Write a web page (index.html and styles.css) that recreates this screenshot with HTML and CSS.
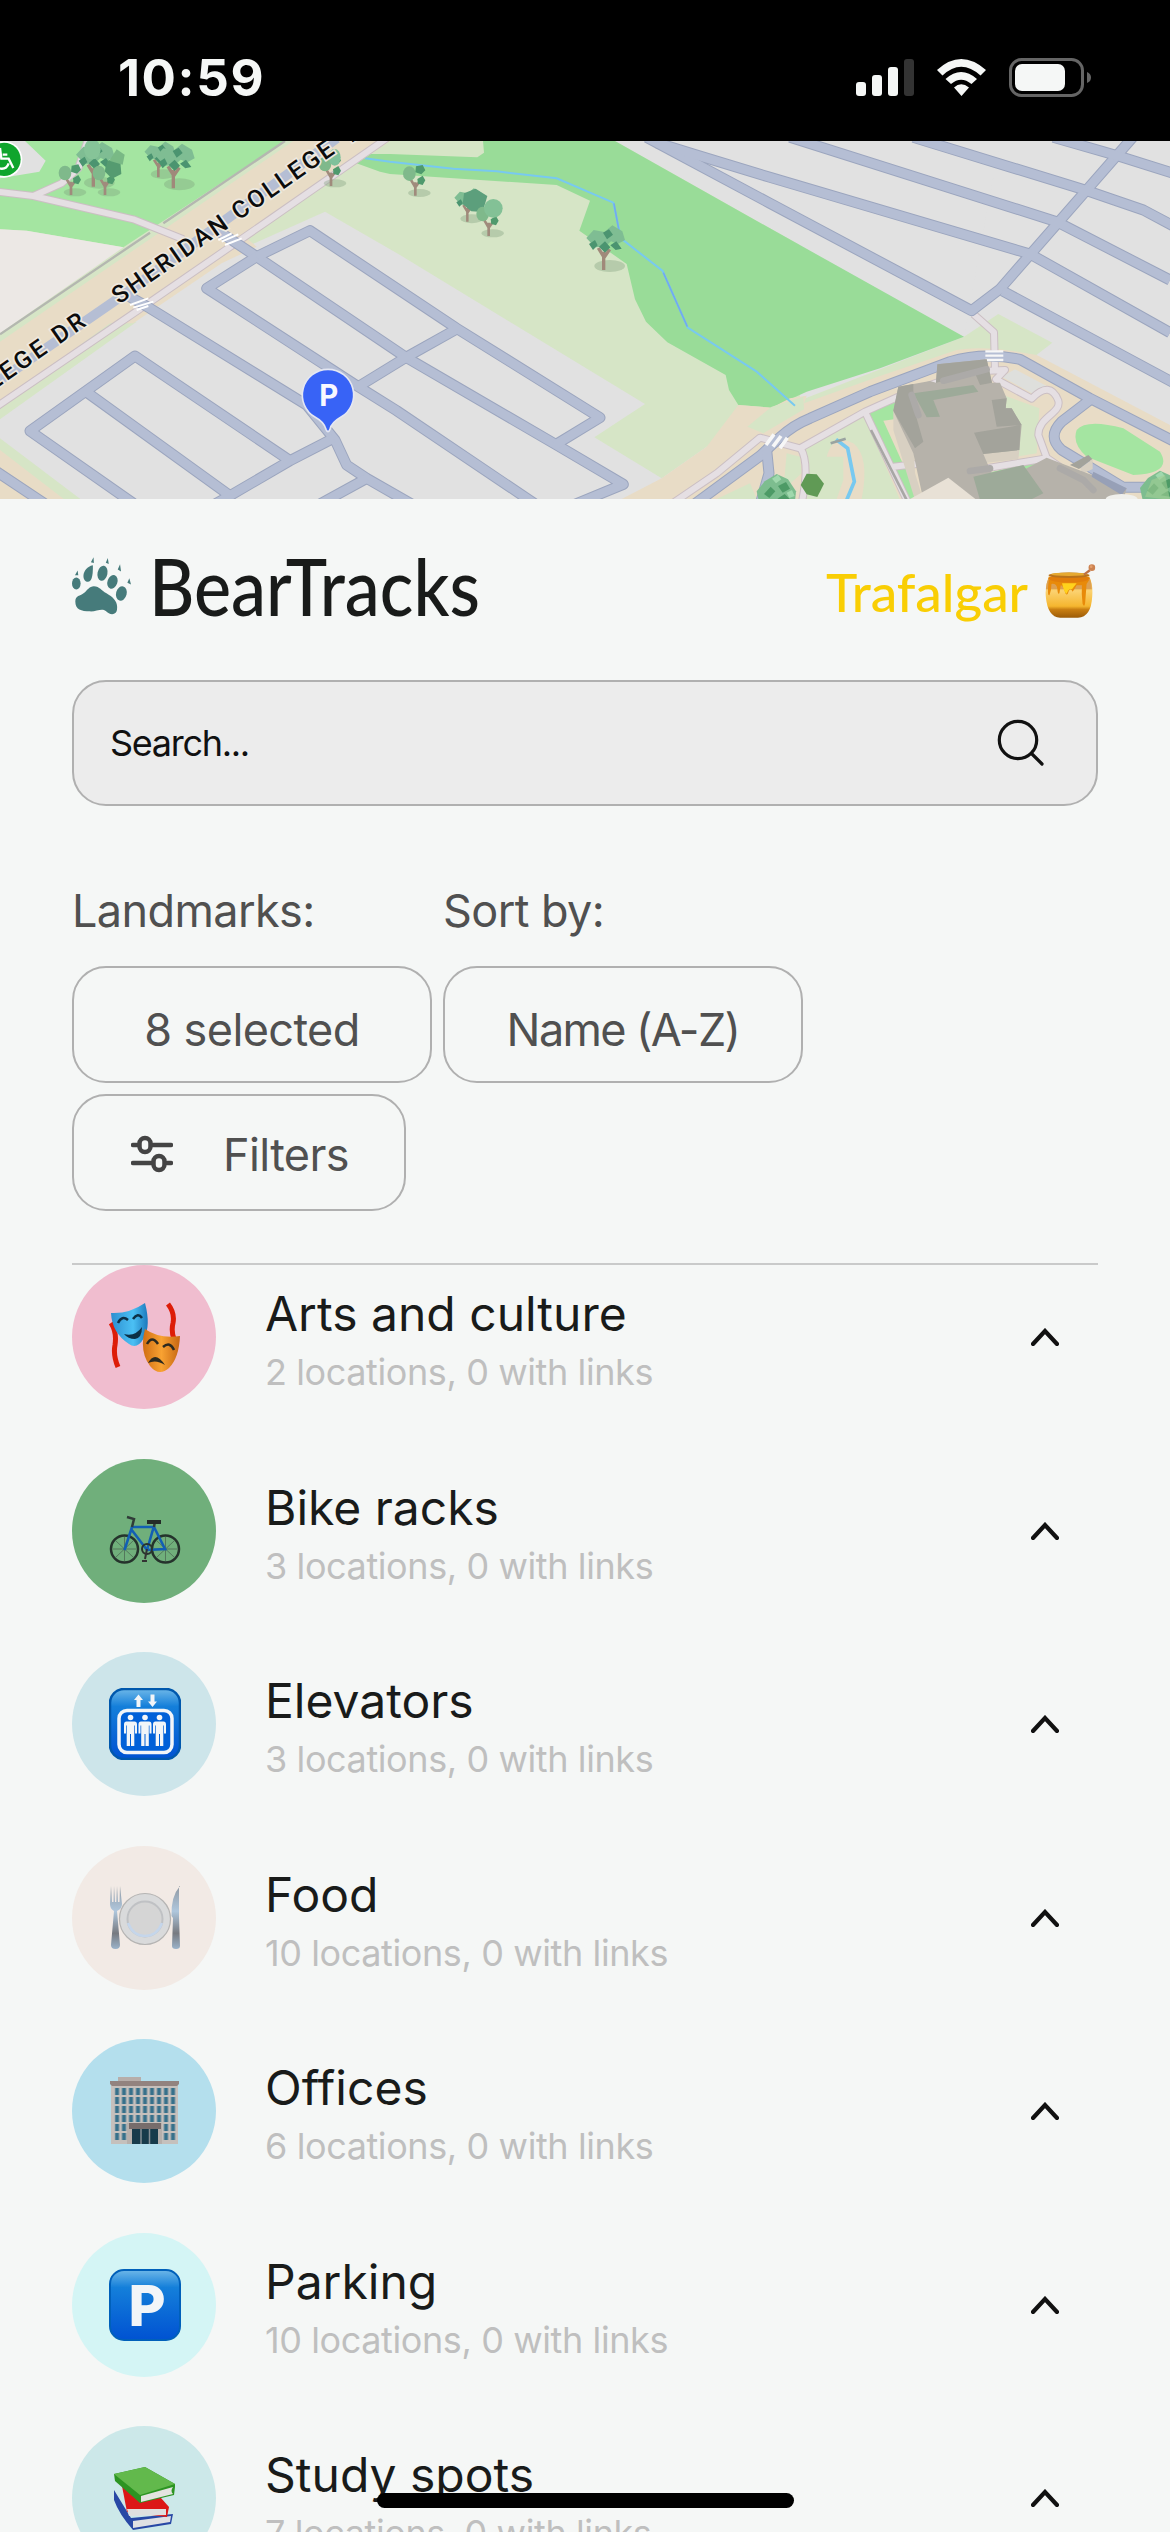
FILE: index.html
```html
<!DOCTYPE html>
<html lang="en">
<head>
    <meta charset="UTF-8">
    <meta name="viewport" content="width=device-width, initial-scale=1.0">
    <title>BearTracks</title>
    <link rel="stylesheet" href="styles.css">
</head>
<body>
    <div class="screen">
        <div class="status-bar">
            <span class="time">10:59</span>
            <svg class="status-icons" viewBox="856 56 236 44">
                <g fill="#f5f7f6">
                    <rect x="856" y="82" width="10" height="14" rx="3"/>
                    <rect x="872" y="75" width="10" height="21" rx="3"/>
                    <rect x="888" y="67" width="10" height="29" rx="3"/>
                </g>
                <rect x="904" y="59" width="10" height="37" rx="3" fill="#333"/>
                <path fill="#f5f7f6" d="M937 70Q961 48 986 70L980.500 75.500Q961 58 942.500 75.500ZM945.500 79Q961 65 977 79L971.500 84Q961 75.500 951 84ZM954 87.500Q961 81 969 87.500L961.500 96Z"/>
                <rect x="1010.500" y="59.500" width="72" height="36" rx="11" fill="none" stroke="#656565" stroke-width="3"/>
                <rect x="1015" y="64" width="50" height="27" rx="7" fill="#f5f7f6"/>
                <path d="M1087 72q4 1.500 4 5.500t-4 5.500z" fill="#656565"/>
            </svg>
        </div>

        <svg class="map" viewBox="0 3 3510 1074" preserveAspectRatio="none">
            <defs>
                <g id="tree-round">
                    <ellipse cx="12" cy="-8" rx="34" ry="12" fill="#7a9a78" opacity=".35"/>
                    <path d="M0 0V-40M0-25l-14-24M0-25l16-22" stroke="#a08b7c" stroke-width="8" fill="none"/>
                    <ellipse cx="-18" cy="-66" rx="19" ry="22" fill="#7fb98b"/>
                    <path d="M2-88l20-4 8 16-12 12-18-6zM6-50l16-10 8 14-8 14-14-4z" fill="#4f9a6d"/>
                </g>
                <g id="tree-tall">
                    <ellipse cx="18" cy="-12" rx="46" ry="18" fill="#7a9a78" opacity=".35"/>
                    <path d="M0 0V-55M0-40l-16-26M0-36l18-26" stroke="#a0897a" stroke-width="10" fill="none"/>
                    <path d="M-52-96l22-24 32 6 24-20 30 18 8 26-22 12-20-8-18 16-30 2z" fill="#7fbd93"/>
                    <path d="M-44-78l18-12 8 16-14 14zM-14-70l18-16 16 18-16 16zM20-74l18-12 16 22-18 4zM-2-112l18-10 12 16-18 14z" fill="#4b9470"/>
                </g>
                <g id="bush">
                    <path d="M-52 40l-8-36 24-30 36-22 34 16 24 36-4 40z" fill="#7dbd8f"/>
                    <path d="M-38 12l20-22 14 14-18 20zM4-12l24-12 12 20-22 12zM2 26l22-14 20 20z" fill="#4d9a66"/>
                    <path d="M-14-34l18-12 10 14-16 12zM30 8l16-8 8 18-16 6z" fill="#a0d8ad"/>
                </g>
                <g id="lot-lines">
                    <path d="M650 270L770 350 1218 652 1670 915 1870 1033 1720 1095"/>
                    <path d="M770 350L930 272 1370 565 1800 833 1665 915"/>
                    <path d="M770 350L620 445 1075 740 1190 812 1610 1095"/>
                    <path d="M1075 740L1218 652 1370 567"/>
                    <path d="M380 465L450 505 920 795 1005 900 1040 975 1100 1015 1240 1095"/>
                    <path d="M1000 895L870 962 690 1067 640 1095M1100 1015L960 1092"/>
                    <path d="M870 962L405 648 90 873 400 1090M258 755L690 1067M-10 995L140 1095"/>
                    <path d="M1940-8L2310 190 2915 512 3000 447 3400-10"/>
                    <path d="M1970 8L2080 42 2310 112 3090 342 3510 578"/>
                    <path d="M2370-8L3170 245 3510 420M2740-8L3255 150 3430 210 3520 258"/>
                    <path d="M3160-8L3355 48 3520 100M3008 453L3520 728"/>
                    <path d="M2080 1095L2280 948 2340 892Q2380 855 2430 835L2610 755 2850 665Q2950 635 3060 658L3270 775 3520 903"/>
                    <path d="M3272 778L3185 845Q3140 890 3185 930L3370 1042H3520M2300 930L2307 1000 2280 1095"/>
                </g>
                <g id="walks">
                    <path d="M-10 155L100 168 400 238 550 298M100 168L185 130 235 85 265-5"/>
                    <path d="M-10 800L430 500 800 245 1160-5"/>
                    <path d="M2010 1095L2150 1000 2280 893 2400 925 2595 815 2700 768 2900 695 3015 690 2988 718 3095 776Q3150 720 3175 782C3185 820 3115 830 3115 885L3140 953 3280 1050"/>
                    <path d="M2920 522L2982 577 2985 690M2402 925Q2430 970 2405 1090M2595 815L2725 1090M2680 980L2750 972M2910 993L3140 955"/>
                </g>
            </defs>

            <rect width="3510" height="1080" fill="#e1e1e1"/>
            <!-- grass around the lots -->
            <path fill="#d6e5c6" d="M0 3H900L0 620ZM740 320L975 215 1200 345 1935 792 1783 892 1985 1015 2120 920 2300 820 2892 590 2995 522 3157 608 3090 660 2400 900 2400 3H1100L720 280ZM0 780L340 540 410 545 0 838ZM0 895L245 1080H0Z"/>
            <path fill="#a4e5a1" d="M0 3H855L370 322 80 272 0 268Z"/>
            <path fill="#ece8e5" d="M0 268L80 272 370 322 0 580Z"/>
            <path fill="#e1e1e1" d="M0 3H75L137 62 118 95 0 115ZM2310 265L1845 3H3000L2892 590Z"/>
            <path fill="#99dc98" d="M1449 3L1452 38 1432 52 1170 42 1090 42 1057 65 1140 95 1170 102 1670 135 1770 182 1738 272 1880 372 1905 478 1938 545 2002 607 2177 705 2187 750 2215 795 2315 803 2420 755 2640 685 2892 590 2310 265 1845 3Z"/>
            <path fill="#e8dcc6" d="M0 605L460 290 880 3H1170L740 295 770 320 665 370 400 550H330L0 790ZM0 930L195 1080H0ZM1865 1077L1985 1015 2120 920 2215 795 2315 803 2370 775 2420 767 2412 790 2640 708 2870 630Q2960 615 3110 645L3510 855V1080Z"/>
            <path fill="#d6e5c6" d="M2315 800L2242 860 2290 880 2412 808 2410 770ZM2410 930L2590 820 2700 1080H2410ZM2150 1077L2250 1030 2270 1077ZM2360 940L2400 950 2405 1000 2350 1050ZM2995 760L3118 805 3110 940 2990 960Z"/>
            <path fill="#e8dcc6" d="M2480 950Q2500 880 2560 910Q2610 950 2585 1077H2510L2530 1020 2530 950Z"/>
            <path fill="#a4e5a1" d="M2605 820L2700 780 2700 950 2770 1080H2720ZM2960 1000L3140 955 3160 1080H2900ZM3230 870Q3260 835 3370 865L3480 935Q3520 1000 3400 1005L3260 950Q3215 910 3230 870Z"/>
            <path fill="#e8dcc6" d="M2650 842L2682 838 2742 960 2738 985 2715 985Z"/>
            <path fill="#dedfdc" d="M3005 710L3045 688 3140 738 3100 762Z"/>
            <path fill="none" stroke="#b4b7b0" stroke-width="7" d="M0 583L450 278M490 250L855 3"/>

            <g fill="none" stroke="#78c9f0" stroke-width="6">
                <path d="M1095 55L1170 65 1360 86 1490 94 1670 115 1840 188 1863 295 1988 393 2063 563 2270 695 2385 797"/>
                <path d="M2508 898L2543 925 2563 1025 2540 1080" stroke-width="11"/>
            </g>
            <path d="M1842 190L1860 290M1990 398L2062 560" stroke="#73abed" stroke-width="5"/>
            <path d="M2492 910l45-14" stroke="#9aa3a0" stroke-width="8"/>

            <g fill="none" stroke-linejoin="round">
                <use href="#walks" stroke="#cbbfc3" stroke-width="24"/>
                <use href="#walks" stroke="#e5dfe3" stroke-width="18"/>
                <use href="#lot-lines" stroke="#9ba5be" stroke-width="33"/>
                <use href="#lot-lines" stroke="#b5bed4" stroke-width="27"/>
                <path d="M-10 727L370 465 1010 -5" stroke="#b5bed4" stroke-width="30"/>
            </g>
            <path d="M390 495l55-20M400 503l60-18M410 510l35-12M655 300l40-20M665 305l50-22M675 315l50-20" stroke="#fff" stroke-width="6"/>
            <path d="M2298 915l24-32M2319 920l24-32M2340 925l22-32" stroke="#f7f7f7" stroke-width="11"/>
            <path d="M2956 634h54M2956 647h54M2956 660h54" stroke="#f7f7f7" stroke-width="7"/>

            <!-- campus buildings -->
            <path fill="#d8d0c2" d="M2680 810L2742 930 2745 1000 2770 1080H2745L2680 870ZM2945 942L3058 930 3055 958 2960 968ZM3240 985l38-28v30l-30 14z"/>
            <path fill="#b6b2aa" d="M2695 740L2790 723 2808 728 2812 673 2960 658 2976 728 3000 728 3020 775 3017 805 3035 805 3065 855 3058 930 2950 942 2975 1000 3010 1022 3140 953 3380 1045 3370 1080H2770L2740 940 2680 812Z"/>
            <path fill="#a3a39b" d="M2695 740L2740 732 2740 800 2770 905 2745 925 2680 812ZM2812 673L2960 658 2976 728 2940 735 2925 700 2808 728ZM2922 878L3062 855 3058 930 2950 942ZM2975 780L3020 775 3017 805 3035 805 3065 855 2990 860ZM3210 975l55-30 12 12-40 30z"/>
            <path fill="#9daa99" d="M2740 760L2920 735 2935 755 2800 780 2820 830 2780 832ZM2920 1010L3070 975 3130 1060 3090 1080H2940Z"/>
            <path fill="none" stroke="#acaaa8" stroke-width="20" stroke-linecap="round" d="M2735 765L2755 825M2830 722L2960 688M2910 993L2970 985M3180 985L3250 1020 3280 1050"/>
            <path fill="#97a0b7" d="M3280 995L3380 1045 3365 1065 3275 1010Z"/>
            <path fill="#e8e1d6" d="M2725 1080L2845 1013 2930 1080Z"/>
            <path fill="none" stroke="#a8a7a5" stroke-width="8" d="M2613 870L2720 1080"/>
            <ellipse cx="3365" cy="1078" rx="48" ry="16" fill="#f0f0ec"/>

            <!-- trees -->
            <use href="#tree-round" x="213" y="165"/>
            <use href="#tree-tall" transform="translate(280 140)"/>
            <ellipse cx="277" cy="28" rx="25" ry="30" fill="#86c498"/>
            <use href="#tree-round" transform="translate(315 165)"/>
            <path d="M322 62l38-10 4 50-28 14-20-20z" fill="#559b70"/>
            <path d="M328 62l22-34 24 16-6 30z" fill="#79b985"/>
            <use href="#tree-tall" transform="translate(475 112) scale(.8)"/>
            <use href="#tree-tall" transform="translate(520 145)"/>
            <use href="#tree-round" x="993" y="138"/>
            <ellipse cx="1004" cy="52" rx="18" ry="25" fill="#7fc19b"/>
            <use href="#tree-round" x="1246" y="167"/>
            <use href="#tree-tall" transform="translate(1402 245) scale(.75)"/>
            <path d="M1392 160l35-14 35 22-14 48-34-2-26-22z" fill="#5c9f7c"/>
            <use href="#tree-round" x="1466" y="288"/>
            <ellipse cx="1480" cy="205" rx="28" ry="28" fill="#83c196"/>
            <use href="#tree-tall" transform="translate(1811 390)"/>
            <use href="#bush" x="2330" y="1050"/>
            <path fill="#609a55" d="M2402 1035l18-34 30 2 22 28-20 40-32-8z"/>
            <use href="#bush" x="3480" y="1040"/>
            <path fill="#a1cf95" d="M3435 1070l20-50 40-16 15 76z" opacity=".6"/>

            <g class="street-label">
                <text transform="translate(357 494) rotate(-35)" textLength="802">SHERIDAN COLLEGE</text>
                <text transform="translate(1054 10) rotate(-35)">DR</text>
                <text transform="translate(-20 752) rotate(-35)" textLength="352">LEGE DR</text>
            </g>

            <g>
                <circle cx="12" cy="58" r="55" fill="#fff"/>
                <circle cx="12" cy="58" r="50" fill="#0fa52d"/>
                <path d="M0 24l4 32h22l14 28M8 44h14M-4 54q-20 24 6 32 18 2 24-16" fill="none" stroke="#fff" stroke-width="7"/>
            </g>
            <g>
                <path d="M984 688a77 77 0 0 1 38 144q-28 16-32 36-6 14-12 0-6-22-32-36a77 77 0 0 1 38-144z" fill="#3863f6" stroke="#e4e7f2" stroke-width="5"/>
                <text class="pin-label" x="986" y="798">P</text>
            </g>
        </svg>

        <div class="content">
            <header class="header">
                <div class="brand">
                    <svg class="paw" viewBox="66 80 178 173" fill="#467b7b">
                        <path d="M132 167C150 168 154 180 170 188 190 200 204 212 202 234 202 256 180 256 168 242 156 232 140 244 120 243 94 242 76 238 76 213 76 194 90 198 104 186 114 177 118 168 132 167Z"/>
                        <ellipse cx="79" cy="159" rx="13" ry="18"/>
                        <path d="M129 104Q130 154 114 154C94 154 94 112 129 104Z"/>
                        <ellipse cx="158" cy="128" rx="15" ry="23" transform="rotate(12 158 128)"/>
                        <ellipse cx="188" cy="154" rx="15" ry="21" transform="rotate(20 188 154)"/>
                        <ellipse cx="215" cy="189" rx="16" ry="22" transform="rotate(15 215 189)"/>
                        <path d="M75 134l8-14 2 14zM123 95l8-15 1 17zM168 96l6-14 3 18zM204 117l7-16 3 22zM233 157l6-14 5 19z"/>
                    </svg>
                    <h1 class="brand-name"><span>BearTracks</span></h1>
                </div>
                <div class="campus">
                    <span class="campus-name">Trafalgar</span>
                    <svg class="honey" viewBox="795 102 153 163">
                        <defs>
                            <linearGradient id="honey-pot" x1="0" x2="0" y1="0" y2="1">
                                <stop offset="0" stop-color="#e89a1d"/>
                                <stop offset=".35" stop-color="#fbd271"/>
                                <stop offset=".72" stop-color="#f5b62f"/>
                                <stop offset=".8" stop-color="#c97f12"/>
                                <stop offset="1" stop-color="#9c5c08"/>
                            </linearGradient>
                        </defs>
                        <path d="M806 140Q794 170 797 200Q802 262 840 264H894Q934 262 937 200Q940 165 928 140Z" fill="url(#honey-pot)"/>
                        <path d="M797 178Q800 150 808 144H928Q936 160 936 178Z" fill="#dca052"/>
                        <path d="M806 150Q800 200 808 196Q814 180 814 162 830 160 832 178 833 196 838 190L842 166Q850 166 856 190 862 200 866 184 872 172 878 186 882 180 890 166H906Q904 190 908 222 914 236 916 216L920 162 928 150Z" fill="#e88a09"/>
                        <path d="M846 160Q852 188 860 192 866 174 876 178L890 160Z" fill="#ffd21c"/>
                        <ellipse cx="867" cy="146" rx="62" ry="12" fill="#e17d0a"/>
                        <ellipse cx="867" cy="136" rx="62" ry="8" fill="#b9721a"/>
                        <ellipse cx="867" cy="133" rx="54" ry="5" fill="#e6a930"/>
                        <path d="M912 134L930 121" stroke="#bd7144" stroke-width="7"/>
                        <circle cx="936" cy="113" r="10" fill="#cc8250"/>
                        <circle cx="934" cy="110" r="4" fill="#e5a06c"/>
                    </svg>
                </div>
            </header>

            <div class="search">
                <span class="search-text">Search...</span>
                <svg class="search-icon" viewBox="0 0 48 48">
                    <circle cx="21" cy="21" r="18.700"/>
                    <path d="M35 35L45 45"/>
                </svg>
            </div>

            <div class="controls">
                <div class="control">
                    <label class="control-label">Landmarks:</label>
                    <button class="btn">8 selected</button>
                </div>
                <div class="control">
                    <label class="control-label">Sort by:</label>
                    <button class="btn btn-sort">Name (A-Z)</button>
                </div>
                <button class="btn btn-filters">
                    <svg class="sliders" viewBox="132 1134 42 38">
                        <path d="M134 1144h5M153 1144h19M134 1162h19M168 1162h4"/>
                        <rect x="140.500" y="1137" width="11" height="14" rx="5.500"/>
                        <rect x="154.500" y="1155" width="11" height="14" rx="5.500"/>
                    </svg>
                    <span>Filters</span>
                </button>
            </div>

            <div class="list">
                <div class="row">
                    <div class="badge badge-arts">
                        <svg class="emoji" viewBox="0 0 72 72">
                            <defs>
                                <linearGradient id="mask-blue" x1="0" x2="1"><stop offset="0" stop-color="#2d8fd0"/><stop offset=".6" stop-color="#4bc0f4"/><stop offset="1" stop-color="#1c79bd"/></linearGradient>
                                <linearGradient id="mask-gold" x1="0" x2="1"><stop offset="0" stop-color="#d06d13"/><stop offset=".5" stop-color="#f8a232"/><stop offset="1" stop-color="#c66612"/></linearGradient>
                            </defs>
                            <path d="M2 22q6 9 4 22-2 10 3 22M59 3q7 9 5 19-2 8 1 16" fill="none" stroke="#dd1c08" stroke-width="5"/>
                            <path d="M2 12Q20 13 36 2 42 25 35 37 28 49 20 43 3 32 2 12Z" fill="url(#mask-blue)"/>
                            <path d="M9 22q4-8 10-3M24 18q5-7 9-1" stroke="#0c3046" stroke-width="2.500" fill="none"/>
                            <path d="M15 33q11 3 18-7 0 11-7 12-7 0-11-5" fill="#0c3046"/>
                            <path d="M36 28Q50 38 71 35 70 57 60 67 50 76 41 65 30 50 36 28Z" fill="url(#mask-gold)"/>
                            <path d="M38 43q5-9 11 0M54 46q7-6 11 3" stroke="#2c2a20" stroke-width="2.500" fill="none"/>
                            <path d="M39 62q7-13 17 2-9-6-17-2" fill="#2c2a20"/>
                        </svg>
                    </div>
                    <div class="row-text">
                        <div class="row-title">Arts and culture</div>
                        <div class="row-sub">2 locations, 0 with links</div>
                    </div>
                    <svg class="chevron" viewBox="0 0 28 18"><path d="M2 16L14 3 26 16"/></svg>
                </div>
                <div class="row">
                    <div class="badge badge-bike">
                        <svg class="emoji" viewBox="0 0 72 72">
                            <g fill="none">
                                <circle cx="15.500" cy="54" r="13.500" stroke="#25332c" stroke-width="2.500"/>
                                <circle cx="56.500" cy="54" r="13.500" stroke="#25332c" stroke-width="2.500"/>
                                <path d="M15.500 42v24M4 54h23M7 46l17 16M7 62l17-16M56.500 42v24M45 54h23M48 46l17 16M48 62l17-16" stroke="#47604f" stroke-width=".7"/>
                                <path d="M15.500 55L23 32H45L56 54 38 55 22 34M45 31L38 55" stroke="#125fb4" stroke-width="2.600"/>
                                <path d="M23 32l2-8-7-2M45 32l1-6" stroke="#303c38" stroke-width="2.500"/>
                                <path d="M38 27h14" stroke="#242b28" stroke-width="4"/>
                                <circle cx="38" cy="54" r="5" stroke="#28332d" stroke-width="2"/>
                                <path d="M38 54l-2 10M33 66h5" stroke="#333" stroke-width="2"/>
                            </g>
                        </svg>
                    </div>
                    <div class="row-text">
                        <div class="row-title">Bike racks</div>
                        <div class="row-sub">3 locations, 0 with links</div>
                    </div>
                    <svg class="chevron" viewBox="0 0 28 18"><path d="M2 16L14 3 26 16"/></svg>
                </div>
                <div class="row">
                    <div class="badge badge-elevator">
                        <svg class="emoji" viewBox="0 0 72 72">
                            <defs>
                                <linearGradient id="tile" x1="0" x2="0" y1="0" y2="1"><stop offset="0" stop-color="#6db7e8"/><stop offset=".25" stop-color="#147fda"/><stop offset="1" stop-color="#0052d2"/></linearGradient>
                                <g id="person"><circle cx="0" cy="29.500" r="2.800"/><path d="M-4 33.500h8q2.500 0 2.500 3v9h-2v-8h-.7V58H.5V46h-1v12h-3.300V37.500h-.7v8h-2v-9q0-3 2.500-3z"/></g>
                            </defs>
                            <rect x="1" y="1" width="70" height="70" rx="14" fill="url(#tile)" stroke="#0058ad" stroke-width="2.500"/>
                            <rect x="10" y="22.500" width="53" height="42" rx="8" fill="#0060d8" stroke="#f2f5f8" stroke-width="3.500"/>
                            <path d="M29.500 6.500l4.500 5.500h-2.500v7h-4v-7H25zM43.500 19l-4.500-5.500h2.500v-7h4v7H48z" fill="#f2f5f8"/>
                            <g fill="#f2f5f8">
                                <use href="#person" x="21.500"/>
                                <use href="#person" x="36"/>
                                <use href="#person" x="50.500"/>
                            </g>
                        </svg>
                    </div>
                    <div class="row-text">
                        <div class="row-title">Elevators</div>
                        <div class="row-sub">3 locations, 0 with links</div>
                    </div>
                    <svg class="chevron" viewBox="0 0 28 18"><path d="M2 16L14 3 26 16"/></svg>
                </div>
                <div class="row">
                    <div class="badge badge-food">
                        <svg class="emoji" viewBox="0 0 72 72">
                            <defs>
                                <linearGradient id="steel" x1="0" x2="0" y1="0" y2="1"><stop offset="0" stop-color="#9099a3"/><stop offset=".4" stop-color="#afc7dd"/><stop offset=".75" stop-color="#777a80"/><stop offset="1" stop-color="#9bb3ca"/></linearGradient>
                            </defs>
                            <circle cx="36" cy="37" r="25.500" fill="#d9dadb" stroke="#b5b4b3" stroke-width="1.200"/>
                            <circle cx="36" cy="37" r="17.500" fill="#d5d5d5" stroke="#bfc1c4" stroke-width="2"/>
                            <path d="M19 41q5 13 17 13t17-13" stroke="#c5d6eb" stroke-width="2.500" fill="none"/>
                            <path d="M2 4l-1 18q0 5 4 7L2 63q0 4 4.500 4T11 63L8 29q5-2 5-7L11 4 10.500 20H9L8 4 7.300 20H6L5 4 4.500 20H3z" fill="url(#steel)"/>
                            <path d="M71 4Q62 14 62.500 34L64 36 63 64q0 3 4 3t4-3L70 35V4z" fill="url(#steel)"/>
                        </svg>
                    </div>
                    <div class="row-text">
                        <div class="row-title">Food</div>
                        <div class="row-sub">10 locations, 0 with links</div>
                    </div>
                    <svg class="chevron" viewBox="0 0 28 18"><path d="M2 16L14 3 26 16"/></svg>
                </div>
                <div class="row">
                    <div class="badge badge-office">
                        <svg class="emoji" viewBox="0 0 72 72">
                            <defs>
                                <pattern id="windows" x="5.500" y="13" width="7" height="9" patternUnits="userSpaceOnUse"><rect x=".5" width="4" height="7" fill="#37718b"/></pattern>
                            </defs>
                            <path d="M9 2h23v5H9z" fill="#b7aeaa"/>
                            <path d="M2 8h67v61H2z" fill="#c5c0bc"/>
                            <path d="M1 6h69v3l-2 2H3L1 9z" fill="#92837f"/>
                            <rect x="5.500" y="13" width="62" height="54" fill="url(#windows)"/>
                            <path d="M18 48h35v21H18z" fill="#b7b0ac"/>
                            <path d="M20 48h32v6H20z" fill="#776d6c"/>
                            <path d="M23 54h26v15H23z" fill="#173b4b"/>
                            <path d="M32 54v15M40.500 54v15" stroke="#879096" stroke-width="1.500"/>
                        </svg>
                    </div>
                    <div class="row-text">
                        <div class="row-title">Offices</div>
                        <div class="row-sub">6 locations, 0 with links</div>
                    </div>
                    <svg class="chevron" viewBox="0 0 28 18"><path d="M2 16L14 3 26 16"/></svg>
                </div>
                <div class="row">
                    <div class="badge badge-parking">
                        <svg class="emoji" viewBox="0 0 72 72">
                            <rect x="1" y="1" width="70" height="70" rx="14" fill="url(#tile)" stroke="#0060ba" stroke-width="2"/>
                            <text class="tile-letter" x="38" y="56.500">P</text>
                        </svg>
                    </div>
                    <div class="row-text">
                        <div class="row-title">Parking</div>
                        <div class="row-sub">10 locations, 0 with links</div>
                    </div>
                    <svg class="chevron" viewBox="0 0 28 18"><path d="M2 16L14 3 26 16"/></svg>
                </div>
                <div class="row">
                    <div class="badge badge-study">
                        <svg class="emoji" viewBox="0 0 72 72">
                            <path d="M5 28L22 56 64 52 62 62 24 68Q10 52 5 38Z" fill="#2848a5"/>
                            <path d="M24 59l38-5-1 6-37 6z" fill="#dfe0e3"/>
                            <path d="M13 24L18 50 58 55 60 45 52 36Z" fill="#dc1717"/>
                            <path d="M18 47l39 0 0 6-37 1z" fill="#dfdfdf"/>
                            <path d="M5 12L36 5 66 22 66 25 65 33 31 41 6 19Z" fill="#2c9422"/>
                            <path d="M5 12L36 5 66 22 31 33Z" fill="#62b94c"/>
                            <path d="M32 34l32-9q-3 4 0 7l-32 8z" fill="#e4e4e0"/>
                        </svg>
                    </div>
                    <div class="row-text">
                        <div class="row-title">Study spots</div>
                        <div class="row-sub">7 locations, 0 with links</div>
                    </div>
                    <svg class="chevron" viewBox="0 0 28 18"><path d="M2 16L14 3 26 16"/></svg>
                </div>
            </div>
        </div>
        <div class="home-indicator"></div>
    </div>
</body>
</html>
```
FILE: styles.css
```css
:root {
    --bg: #f5f7f6;
    --text-color: #191b1a;
    --muted: #505050;
    --faint: #bfbfbf;
    --border: #b0b0b0;
}

* {
    box-sizing: border-box;
}

body {
    margin: 0;
    background-color: var(--bg);
    color: var(--text-color);
    font-family: Inter, "Liberation Sans", sans-serif;
}

.screen {
    position: relative;
    width: 1170px;
    height: 2532px;
    overflow: hidden;
}

.status-bar {
    display: flex;
    justify-content: space-between;
    height: 141px;
    padding: 56px 78px 0 118px;
    background-color: #000;
}

.time {
    color: var(--bg);
    font-size: 51px;
    font-weight: 700;
    line-height: 44px;
    letter-spacing: 1.6px;
}

.status-icons {
    width: 236px;
    height: 44px;
}

.map {
    display: block;
    width: 1170px;
    height: 358px;
}

.street-label {
    font-family: Roboto, sans-serif;
    font-size: 73px;
    font-weight: 500;
    letter-spacing: 8px;
    fill: #0c0c0c;
    stroke: #eee9e0;
    stroke-width: 10px;
    paint-order: stroke;
}

.pin-label {
    font-size: 88px;
    font-weight: 700;
    fill: #f8f8ff;
    text-anchor: middle;
}

.content {
    padding: 0 72px;
}

.header {
    display: flex;
    justify-content: space-between;
    height: 181px;
    padding-top: 56px;
}

.brand,
.campus {
    display: flex;
}

.paw {
    width: 59px;
    height: 58px;
    margin-top: 2px;
}

.brand-name {
    width: 330px;
    margin: -9px 0 0 18px;
    font-family: Lato, sans-serif;
    font-size: 79px;
    font-weight: 500;
    line-height: 80px;
    white-space: nowrap;
}

.brand-name span {
    display: inline-block;
    transform: scaleX(0.887);
    transform-origin: left;
}

.campus-name {
    width: 219px;
    color: #f9ce04;
    font-family: Lato, sans-serif;
    font-size: 53px;
    font-weight: 500;
    line-height: 74px;
}

.honey {
    width: 51px;
    height: 54px;
    margin: 9px 2px 0 0;
}

.search {
    display: flex;
    align-items: center;
    justify-content: space-between;
    height: 126px;
    padding: 0 51px 0 36px;
    border: 2px solid var(--border);
    border-radius: 34px;
    background-color: #ececec;
}

.search-text {
    color: #111;
    font-size: 36px;
    letter-spacing: -1.3px;
}

.search-icon {
    width: 48px;
    height: 48px;
    fill: none;
    stroke: #111;
    stroke-width: 3.2;
    stroke-linecap: round;
}

.controls {
    display: flex;
    flex-wrap: wrap;
    gap: 11px;
    margin-top: 74px;
    padding-bottom: 52px;
    border-bottom: 2px solid #c9caca;
}

.control-label {
    display: block;
    height: 86px;
    color: var(--muted);
    font-size: 45px;
    line-height: 61px;
    letter-spacing: -0.6px;
}

.btn {
    display: flex;
    align-items: center;
    justify-content: center;
    width: 360px;
    height: 117px;
    padding: 9px 0 0;
    border: 2px solid var(--border);
    border-radius: 34px;
    background: none;
    color: var(--muted);
    font-family: inherit;
    font-size: 45px;
    letter-spacing: -0.6px;
}

.btn-sort {
    letter-spacing: -1.6px;
}

.btn-filters {
    width: 334px;
    gap: 50px;
    padding: 3px 0 0 2px;
}

.sliders {
    width: 42px;
    height: 38px;
    fill: none;
    stroke: #444;
    stroke-width: 4.5;
    stroke-linecap: round;
}

.row {
    display: flex;
    align-items: center;
    height: 144px;
    margin-bottom: 49.5px;
    padding-right: 39px;
}

.badge {
    display: flex;
    align-items: center;
    justify-content: center;
    width: 144px;
    height: 144px;
    border-radius: 50%;
}

.badge-arts { background-color: #f0bdcf; }
.badge-bike { background-color: #70af7b; }
.badge-elevator { background-color: #cde5ea; }
.badge-food { background-color: #f2eae5; }
.badge-office { background-color: #b4dfed; }
.badge-parking { background-color: #d4f5f5; }
.badge-study { background-color: #cce8e9; }

.emoji {
    width: 72px;
    height: 72px;
    margin-left: 2px;
}

.tile-letter {
    font-size: 57px;
    font-weight: 800;
    fill: #f2f5f8;
    text-anchor: middle;
}

.row-text {
    flex: 1;
    padding: 6px 0 0 49px;
}

.row-title {
    font-size: 48px;
    line-height: 56px;
}

.row-sub {
    margin-top: 8px;
    color: var(--faint);
    font-size: 36px;
    line-height: 44px;
    letter-spacing: -0.4px;
}

.chevron {
    width: 28px;
    height: 18px;
    fill: none;
    stroke: #111;
    stroke-width: 4.2;
    stroke-linecap: round;
}

.home-indicator {
    position: absolute;
    left: 377px;
    top: 2493px;
    width: 417px;
    height: 15px;
    border-radius: 8px;
    background-color: #000;
}
```
